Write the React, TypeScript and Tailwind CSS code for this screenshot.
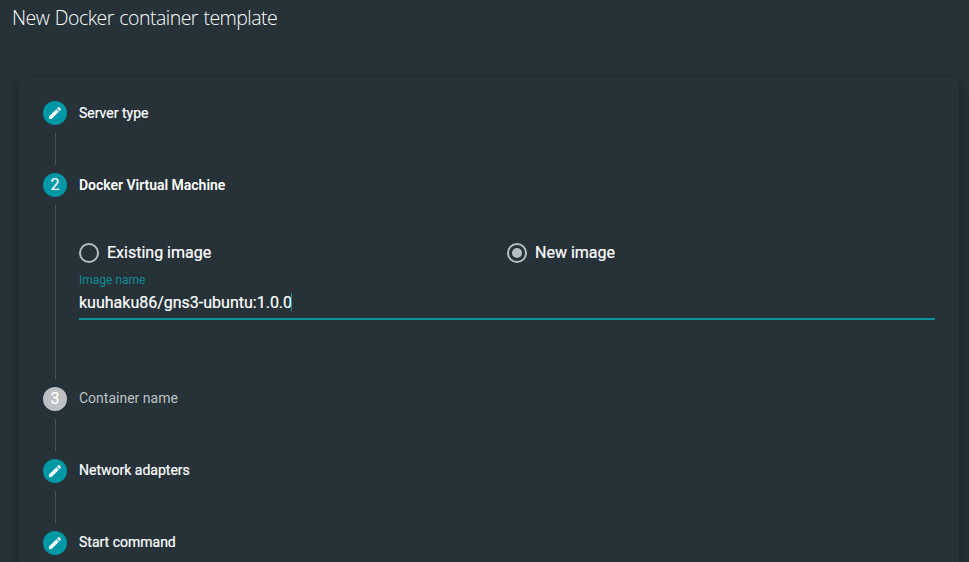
import type { ReactNode } from "react";

function Pencil() {
  return (
    <svg viewBox="0 0 24 24" className="size-4 fill-white" aria-hidden="true">
      <path d="M3 17.25V21h3.75L17.81 9.94l-3.75-3.75L3 17.25zM20.71 7.04c.39-.39.39-1.02 0-1.41l-2.34-2.34c-.39-.39-1.02-.39-1.41 0l-1.83 1.83 3.75 3.75 1.83-1.83z" />
    </svg>
  );
}

type StepProps = {
  icon: ReactNode;
  label: string;
  state?: "done" | "active" | "pending";
  raised?: boolean;
  children?: ReactNode;
};

function Step({ icon, label, state = "done", raised = false, children }: StepProps) {
  const badge = state === "pending" ? "bg-[#bec1c3]" : "bg-[#0097a7]";
  const text =
    state === "pending"
      ? "font-normal text-[#bec1c3]"
      : state === "active"
        ? "font-semibold tracking-[-0.02px] text-white"
        : "font-normal text-white [-webkit-text-stroke:0.2px_white]";
  return (
    <li className="flex min-h-[72px] gap-3">
      <div className="flex w-6 shrink-0 flex-col">
        <div className={`flex size-6 shrink-0 items-center justify-center rounded-full text-base leading-6 text-white [-webkit-text-stroke:0.2px_white] ${badge}`}>
          {icon}
        </div>
        <div className="my-2 ml-3 w-px grow bg-[#475157]" />
      </div>
      <div className="min-w-0 grow">
        <div className={`text-sm ${raised ? "leading-[22px]" : "leading-6"} ${text}`}>{label}</div>
        {children}
      </div>
    </li>
  );
}

function Radio({ label, checked = false }: { label: string; checked?: boolean }) {
  return (
    <label className="flex h-5 w-1/2 items-center gap-2 text-base leading-5 text-white">
      <span className="flex size-5 items-center justify-center rounded-full border-2 border-[#b4bec3]">
        {checked && <span className="size-2.5 rounded-full bg-[#b4bec3]" />}
      </span>
      <span className="[-webkit-text-stroke:0.2px_white]">{label}</span>
    </label>
  );
}

export default function App() {
  return (
    <div className="flex h-[562px] w-[969px] flex-col overflow-hidden bg-[#263238] font-['Roboto',sans-serif]">
      <h1 className="h-[77px] shrink-0 pt-[3px] pl-3 font-['Open_Sans',sans-serif] text-[19.5px] leading-[30px] font-light tracking-[-0.53px] text-white [word-spacing:1px]">
        New Docker container template
      </h1>
      <main className="mr-2.5 ml-[19px] h-[600px] shrink-0 rounded bg-[#263238] px-6 pt-6 shadow-[0_5px_5px_-3px_rgba(0,0,0,0.2),0_8px_10px_1px_rgba(0,0,0,0.14),0_3px_14px_2px_rgba(0,0,0,0.12)]">
        <ol>
          <Step icon={<Pencil />} label="Server type" />
          <Step icon="2" label="Docker Virtual Machine" state="active">
            <div className="flex h-[190px] flex-col pt-[46px]">
              <div className="flex">
                <Radio label="Existing image" />
                <Radio label="New image" checked />
              </div>
              <div className="mt-2 text-xs leading-[18px] text-[#0f8c99]">Image name</div>
              <div className="flex h-[31px] items-start border-b-2 border-[#0f929f] pt-1 text-base leading-5 text-white">
                <span className="[-webkit-text-stroke:0.2px_white]">kuuhaku86/gns3-ubuntu:1.0.0</span>
                <span className="relative -ml-px h-[18px] w-px bg-[#0097a7]" />
              </div>
            </div>
          </Step>
          <Step icon="3" label="Container name" state="pending" raised />
          <Step icon={<Pencil />} label="Network adapters" raised />
          <Step icon={<Pencil />} label="Start command" raised />
        </ol>
      </main>
    </div>
  );
}
